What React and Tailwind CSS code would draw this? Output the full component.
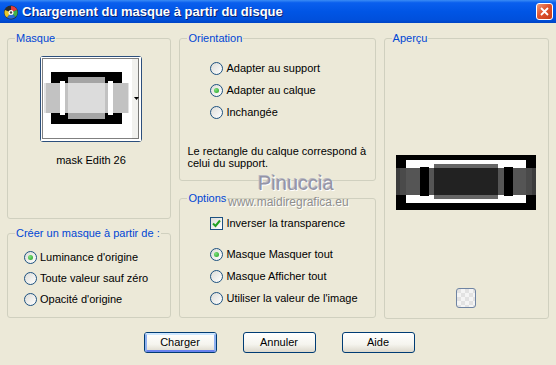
import React from 'react'

// Small XP-style radio button
function Radio({ checked, label }) {
  return (
    <div className="flex items-center h-[13px] gap-[3px]">
      <div className="relative w-[13px] h-[13px] rounded-full border border-[#1c5180] bg-[linear-gradient(135deg,#dcdcd7,#ffffff)] flex items-center justify-center">
        {checked && <div className="w-[5px] h-[5px] rounded-full bg-[radial-gradient(circle_at_35%_35%,#7ee07e,#21a121)]" />}
      </div>
      <span className="leading-[13px] whitespace-nowrap">{label}</span>
    </div>
  )
}

function Checkbox({ checked, label }) {
  return (
    <div className="flex items-center h-[13px] gap-[3px]">
      <div className="w-[13px] h-[13px] border border-[#1c5180] bg-[linear-gradient(135deg,#dcdcd7,#ffffff)] flex items-center justify-center">
        {checked && (
          <svg width="9" height="9" viewBox="0 0 9 9">
            <path d="M1 4.5 L3.5 7 L8 1.5" fill="none" stroke="#21a121" strokeWidth="2" />
          </svg>
        )}
      </div>
      <span className="leading-[13px] whitespace-nowrap">{label}</span>
    </div>
  )
}

// Group box with a blue caption sitting on the top edge
function Group({ title, className, children }) {
  return (
    <div className={'relative border border-[#d0d0bf] rounded-[3px] ' + className}>
      <span className="absolute top-[-7px] left-[7px] px-[1px] leading-[13px] bg-[#ece9d8] text-[#0046d5] whitespace-nowrap">
        {title}
      </span>
      {children}
    </div>
  )
}

function XpButton({ label, primary }) {
  return (
    <div className="w-[73px] h-[21px] rounded-[3px] border border-[#003c74] bg-[linear-gradient(180deg,#ffffff_0%,#f5f4ee_60%,#dcd8cc_100%)] flex items-center justify-center">
      <div
        className={
          'w-full h-full rounded-[2px] flex items-center justify-center ' +
          (primary ? 'border-2 border-[#8fb1f0] border-t-[#cee7ff] border-b-[#6982ee]' : '')
        }
      >
        <span className="leading-[13px]">{label}</span>
      </div>
    </div>
  )
}

function MaskThumb() {
  return (
    <svg width="100" height="84" viewBox="0 0 100 84">
      <rect x="0" y="0" width="100" height="84" fill="#ffffff" />
      <rect x="91" y="2" width="7" height="80" fill="#f1f1ee" />
      <rect x="10" y="15" width="71" height="52" fill="#000" />
      <rect x="3" y="26" width="3" height="30" fill="#e2e2e2" />
      <rect x="85" y="26" width="3" height="30" fill="#e2e2e2" />
      <rect x="5" y="26" width="82" height="30" fill="#c2c2c2" />
      <rect x="27" y="20" width="37" height="42" fill="#a5a5a5" />
      <rect x="27" y="26" width="37" height="30" fill="#dcdcdc" />
      <rect x="19" y="24" width="5" height="34" fill="#fff" />
      <rect x="67" y="24" width="5" height="34" fill="#fff" />
      <path d="M93 40 L98 40 L95.5 43 Z" fill="#000" />
      <rect x="1.5" y="1.5" width="96" height="80" fill="none" stroke="#000" strokeWidth="1" strokeDasharray="1 1" />
    </svg>
  )
}

function Preview() {
  return (
    <svg width="140" height="55" viewBox="0 0 140 55">
      <rect x="0" y="0" width="140" height="55" fill="#000" />
      <rect x="10" y="5" width="120" height="43" fill="#fff" />
      <rect x="0" y="13" width="140" height="27" fill="#3c3c3c" />
      <rect x="4" y="13" width="132" height="27" fill="#4a4a4a" />
      <rect x="10" y="13" width="120" height="27" fill="#555" />
      <rect x="38" y="9" width="64" height="35" fill="#666" />
      <rect x="38" y="13" width="64" height="27" fill="#222" />
      <rect x="24" y="12" width="9" height="29" fill="#000" />
      <rect x="108" y="12" width="9" height="29" fill="#000" />
    </svg>
  )
}

function AppIcon() {
  return (
    <svg width="16" height="16" viewBox="0 0 16 16">
      <circle cx="8" cy="8.5" r="7" fill="#2b2b2b" />
      <path d="M8 8.5 L8 2 A6.5 6.5 0 0 1 14 6 Z" fill="#e43c3c" />
      <path d="M8 8.5 L14 6 A6.5 6.5 0 0 1 12.5 13 Z" fill="#3fb24a" />
      <path d="M8 8.5 L12.5 13 A6.5 6.5 0 0 1 4 13.5 Z" fill="#2a6ed8" />
      <path d="M8 8.5 L4 13.5 A6.5 6.5 0 0 1 2 6 Z" fill="#e8c82c" />
      <circle cx="8" cy="8.5" r="2.5" fill="#fff" />
      <circle cx="8" cy="8.5" r="1.2" fill="#444" />
    </svg>
  )
}

export default function App() {
  return (
    <div className="relative w-[556px] h-[365px] overflow-hidden bg-[#ece9d8] text-[11px] text-black font-['Liberation_Sans',Arial,sans-serif]">
      {/* Title bar */}
      <div className="h-[23px] flex items-center bg-[linear-gradient(180deg,#3a8cf5_0%,#0a5fee_12%,#0055e5_50%,#0050dc_85%,#0044c4_100%)]">
        <div className="ml-[3px] mt-[1px]">
          <AppIcon />
        </div>
        <span className="ml-[3px] text-white font-bold text-[13px] leading-[16px] [text-shadow:1px_1px_0_#0a1e6e] whitespace-nowrap">
          Chargement du masque à partir du disque
        </span>
        <div className="ml-auto mr-[3px] w-[17px] h-[17px] rounded-[3px] border border-white bg-[linear-gradient(135deg,#f09a7a_0%,#e0532e_45%,#c63d18_100%)] flex items-center justify-center">
          <svg width="9" height="9" viewBox="0 0 9 9">
            <path d="M1 1 L8 8 M8 1 L1 8" stroke="#fff" strokeWidth="1.8" />
          </svg>
        </div>
      </div>

      {/* Groups */}
      <div className="flex gap-[8px] px-[7px] pt-[15px]">
        <div className="w-[166px] flex flex-col gap-[14px]">
          <Group title="Masque" className="h-[181px] pt-[17px]">
            <div className="ml-[32px] w-[102px] h-[86px] rounded-[3px] border border-[#2c4f7c]">
              <MaskThumb />
            </div>
            <div className="mt-[12px] ml-[32px] w-[102px] text-center leading-[13px]">mask Edith 26</div>
          </Group>
          <Group title="Créer un masque à partir de :" className="h-[85px] pt-[17px] pl-[16px]">
            <div className="flex flex-col gap-[8px]">
              <Radio checked label="Luminance d'origine" />
              <Radio label="Toute valeur sauf zéro" />
              <Radio label="Opacité d'origine" />
            </div>
          </Group>
        </div>

        <div className="w-[198px] flex flex-col gap-[17px]">
          <Group title="Orientation" className="h-[143px] pt-[23px]">
            <div className="pl-[30px] flex flex-col gap-[9px]">
              <Radio label="Adapter au support" />
              <Radio checked label="Adapter au calque" />
              <Radio label="Inchangée" />
            </div>
            <p className="mt-[26px] pl-[7px] leading-[12px]">
              Le rectangle du calque correspond à
              <br />
              celui du support.
            </p>
          </Group>
          <Group title="Options" className="h-[120px] pt-[18px] pl-[30px]">
            <Checkbox checked label="Inverser la transparence" />
            <div className="mt-[18px] flex flex-col gap-[9px]">
              <Radio checked label="Masque Masquer tout" />
              <Radio label="Masque Afficher tout" />
              <Radio label="Utiliser la valeur de l'image" />
            </div>
          </Group>
        </div>

        <div className="w-[167px]">
          <Group title="Aperçu" className="h-[281px] pt-[116px] flex flex-col items-center">
            <Preview />
            <div className="mt-[78px] w-[20px] h-[20px] rounded-[3px] border border-[#6f84a3] bg-[repeating-conic-gradient(#f4f4f4_0_25%,#e2e2e2_0_50%)] bg-[length:8px_8px]" />
          </Group>
        </div>
      </div>

      {/* Buttons */}
      <div className="mt-[13px] flex justify-center gap-[26px] pl-[2px]">
        <XpButton primary label="Charger" />
        <XpButton label="Annuler" />
        <XpButton label="Aide" />
      </div>

      {/* Watermark */}
      <span className="absolute left-[258px] top-[172px] text-[20px] leading-[22px] text-[#9494a6] [text-shadow:1px_1px_0_#ffffff,-1px_-1px_0_#b8b8c4]">
        Pinuccia
      </span>
      <span className="absolute left-[228px] top-[196px] text-[12px] leading-[12px] text-[#8e8e8e] [text-shadow:1px_1px_0_#ffffff]">
        www.maidiregrafica.eu
      </span>
    </div>
  )
}
